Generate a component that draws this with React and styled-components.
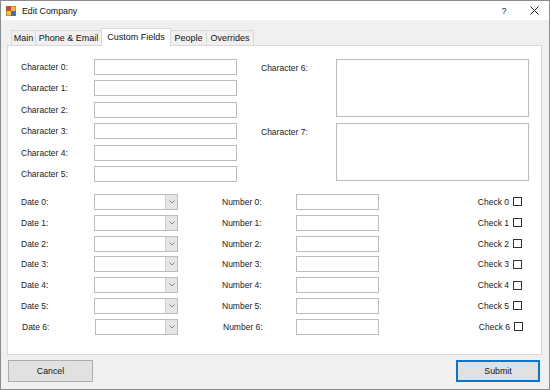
import React from 'react';
import styled, { createGlobalStyle } from 'styled-components';

const GlobalStyle = createGlobalStyle`
  html, body {
    margin: 0;
    padding: 0;
    background: #ffffff;
  }
  * {
    box-sizing: border-box;
  }
  body {
    font-family: "Liberation Sans", Arial, sans-serif;
  }
`;

const Window = styled.div`
  width: 550px;
  height: 390px;
  border: 1px solid #8c8c8c;
  background: #f0f0f0;
  display: flex;
  flex-direction: column;
  color: #1a1a1a;
`;

const TitleBar = styled.div`
  height: 19px;
  background: #ffffff;
  display: flex;
  align-items: center;
  padding-left: 5px;
  font-size: 8.8px;
`;

const Title = styled.span`
  margin-left: 6px;
  color: #111;
`;

const TitleButton = styled.span`
  width: 30px;
  display: flex;
  justify-content: center;
  align-items: center;
  font-size: 9px;
  color: #222;
  margin-left: ${p => (p.$first ? 'auto' : '0')};
`;

const Body = styled.div`
  flex: 1;
  padding: 7px 0 0 6px;
  display: flex;
  flex-direction: column;
`;

const TabStrip = styled.div`
  display: flex;
  align-items: flex-end;
  padding-left: 5px;
  height: 18px;
  position: relative;
  z-index: 1;
`;

const Tab = styled.div`
  width: ${p => p.$w}px;
  height: ${p => (p.$active ? 18 : 15)}px;
  margin-bottom: ${p => (p.$active ? -1 : 0)}px;
  background: ${p => (p.$active ? '#ffffff' : '#f0f0f0')};
  border: 1px solid #d9d9d9;
  border-bottom: none;
  margin-left: -1px;
  display: flex;
  justify-content: center;
  align-items: ${p => (p.$active ? 'flex-start' : 'center')};
  padding-top: ${p => (p.$active ? 3 : 0)}px;
  font-size: 9px;
  color: #111;
  white-space: nowrap;
`;

const Panel = styled.div`
  width: 535px;
  height: 310px;
  background: #ffffff;
  border: 1px solid #d9d9d9;
  display: flex;
  flex-direction: column;
`;

const TopSection = styled.div`
  display: flex;
  gap: 24px;
  padding: 13px 0 0 13px;
`;

const FieldGrid = styled.div`
  display: grid;
  grid-template-columns: ${p => p.$label}px ${p => p.$field}px;
  grid-auto-rows: ${p => p.$row}px;
  row-gap: ${p => p.$gap}px;
  align-items: center;
`;

const Label = styled.span`
  font-size: 8.5px;
  color: #1a1a1a;
  white-space: nowrap;
  align-self: ${p => (p.$top ? 'start' : 'center')};
  padding-top: ${p => (p.$top ? 4 : 0)}px;
  padding-left: ${p => p.$nudge || 0}px;
`;

const TextBox = styled.div`
  height: 16px;
  border: 1px solid #bcbcbc;
  background: #fff;
  margin-left: ${p => p.$nudge || 0}px;
`;

const TextArea = styled.div`
  height: 58px;
  border: 1px solid #bcbcbc;
  background: #fff;
`;

const BottomSection = styled.div`
  display: flex;
  padding: 12px 19px 0 13px;
`;

const Combo = styled.div`
  height: 16px;
  border: 1px solid #bcbcbc;
  background: #fff;
  display: flex;
  justify-content: flex-end;
  margin-left: ${p => p.$nudge || 0}px;
`;

const DropButton = styled.div`
  width: 12px;
  height: 100%;
  background: #e6e6e6;
  border-left: 1px solid #d0d0d0;
  display: flex;
  align-items: center;
  justify-content: center;
`;

const NumberGrid = styled(FieldGrid)`
  margin-left: 44px;
`;

const CheckList = styled.div`
  margin-left: auto;
  display: grid;
  grid-auto-rows: 16px;
  row-gap: 4.8px;
  align-items: center;
  justify-items: end;
`;

const CheckRow = styled.label`
  display: flex;
  align-items: center;
  gap: 4px;
  font-size: 8.5px;
  color: #1a1a1a;
  margin-right: ${p => (p.$nudge ? -1 : 0)}px;
`;

const CheckBox = styled.span`
  width: 9px;
  height: 9px;
  border: 1px solid #333;
  background: #fff;
`;

const Footer = styled.div`
  display: flex;
  justify-content: space-between;
  padding: 5px 9px 0 1px;
`;

const Button = styled.div`
  width: ${p => p.$w}px;
  height: 22px;
  background: #e1e1e1;
  border: ${p => (p.$primary ? '2px solid #0078d7' : '1px solid #adadad')};
  display: flex;
  justify-content: center;
  align-items: center;
  font-size: 8.8px;
  color: #111;
`;

const AppIcon = () => (
  <svg width="10" height="10" viewBox="0 0 10 10">
    <rect x="0" y="0" width="10" height="10" fill="#f2c23b" />
    <rect x="0" y="0" width="5" height="5" fill="#d9402c" />
    <rect x="5" y="5" width="5" height="5" fill="#2f6fd0" />
    <rect x="0.5" y="0.5" width="9" height="9" fill="none" stroke="#a07020" strokeWidth="0.6" />
  </svg>
);

const CloseIcon = () => (
  <svg width="9" height="9" viewBox="0 0 9 9">
    <path d="M0.5 0.5 L8.5 8.5 M8.5 0.5 L0.5 8.5" stroke="#222" strokeWidth="1" />
  </svg>
);

const Chevron = () => (
  <svg width="6" height="4" viewBox="0 0 6 4">
    <path d="M0.5 0.5 L3 3 L5.5 0.5" fill="none" stroke="#7a7a7a" strokeWidth="0.9" />
  </svg>
);

const tabs = [
  { name: 'Main', w: 25 },
  { name: 'Phone & Email', w: 67 },
  { name: 'Custom Fields', w: 70, active: true },
  { name: 'People', w: 37 },
  { name: 'Overrides', w: 48 },
];

const seven = [0, 1, 2, 3, 4, 5, 6];

export default function App() {
  return (
    <>
      <GlobalStyle />
      <Window>
        <TitleBar>
          <AppIcon />
          <Title>Edit Company</Title>
          <TitleButton $first>?</TitleButton>
          <TitleButton><CloseIcon /></TitleButton>
        </TitleBar>
        <Body>
          <TabStrip>
            {tabs.map(t => (
              <Tab key={t.name} $w={t.w} $active={t.active}>{t.name}</Tab>
            ))}
          </TabStrip>
          <Panel>
            <TopSection>
              <FieldGrid $label={73} $field={143} $row={16} $gap={5.4}>
                {[0, 1, 2, 3, 4, 5].map(i => (
                  <React.Fragment key={i}>
                    <Label>Character {i}:</Label>
                    <TextBox />
                  </React.Fragment>
                ))}
              </FieldGrid>
              <FieldGrid $label={75} $field={193} $row={58} $gap={6}>
                {[6, 7].map(i => (
                  <React.Fragment key={i}>
                    <Label $top>Character {i}:</Label>
                    <TextArea />
                  </React.Fragment>
                ))}
              </FieldGrid>
            </TopSection>
            <BottomSection>
              <FieldGrid $label={73} $field={84} $row={16} $gap={4.8}>
                {seven.map(i => (
                  <React.Fragment key={i}>
                    <Label $nudge={i === 6 ? 1 : 0}>Date {i}:</Label>
                    <Combo $nudge={i === 6 ? 1 : 0}>
                      <DropButton><Chevron /></DropButton>
                    </Combo>
                  </React.Fragment>
                ))}
              </FieldGrid>
              <NumberGrid $label={74} $field={83} $row={16} $gap={4.8}>
                {seven.map(i => (
                  <React.Fragment key={i}>
                    <Label $nudge={i === 6 ? 1 : 0}>Number {i}:</Label>
                    <TextBox />
                  </React.Fragment>
                ))}
              </NumberGrid>
              <CheckList>
                {seven.map(i => (
                  <CheckRow key={i} $nudge={i === 6}>
                    Check {i}
                    <CheckBox />
                  </CheckRow>
                ))}
              </CheckList>
            </BottomSection>
          </Panel>
          <Footer>
            <Button $w={85}>Cancel</Button>
            <Button $w={84} $primary>Submit</Button>
          </Footer>
        </Body>
      </Window>
    </>
  );
}
